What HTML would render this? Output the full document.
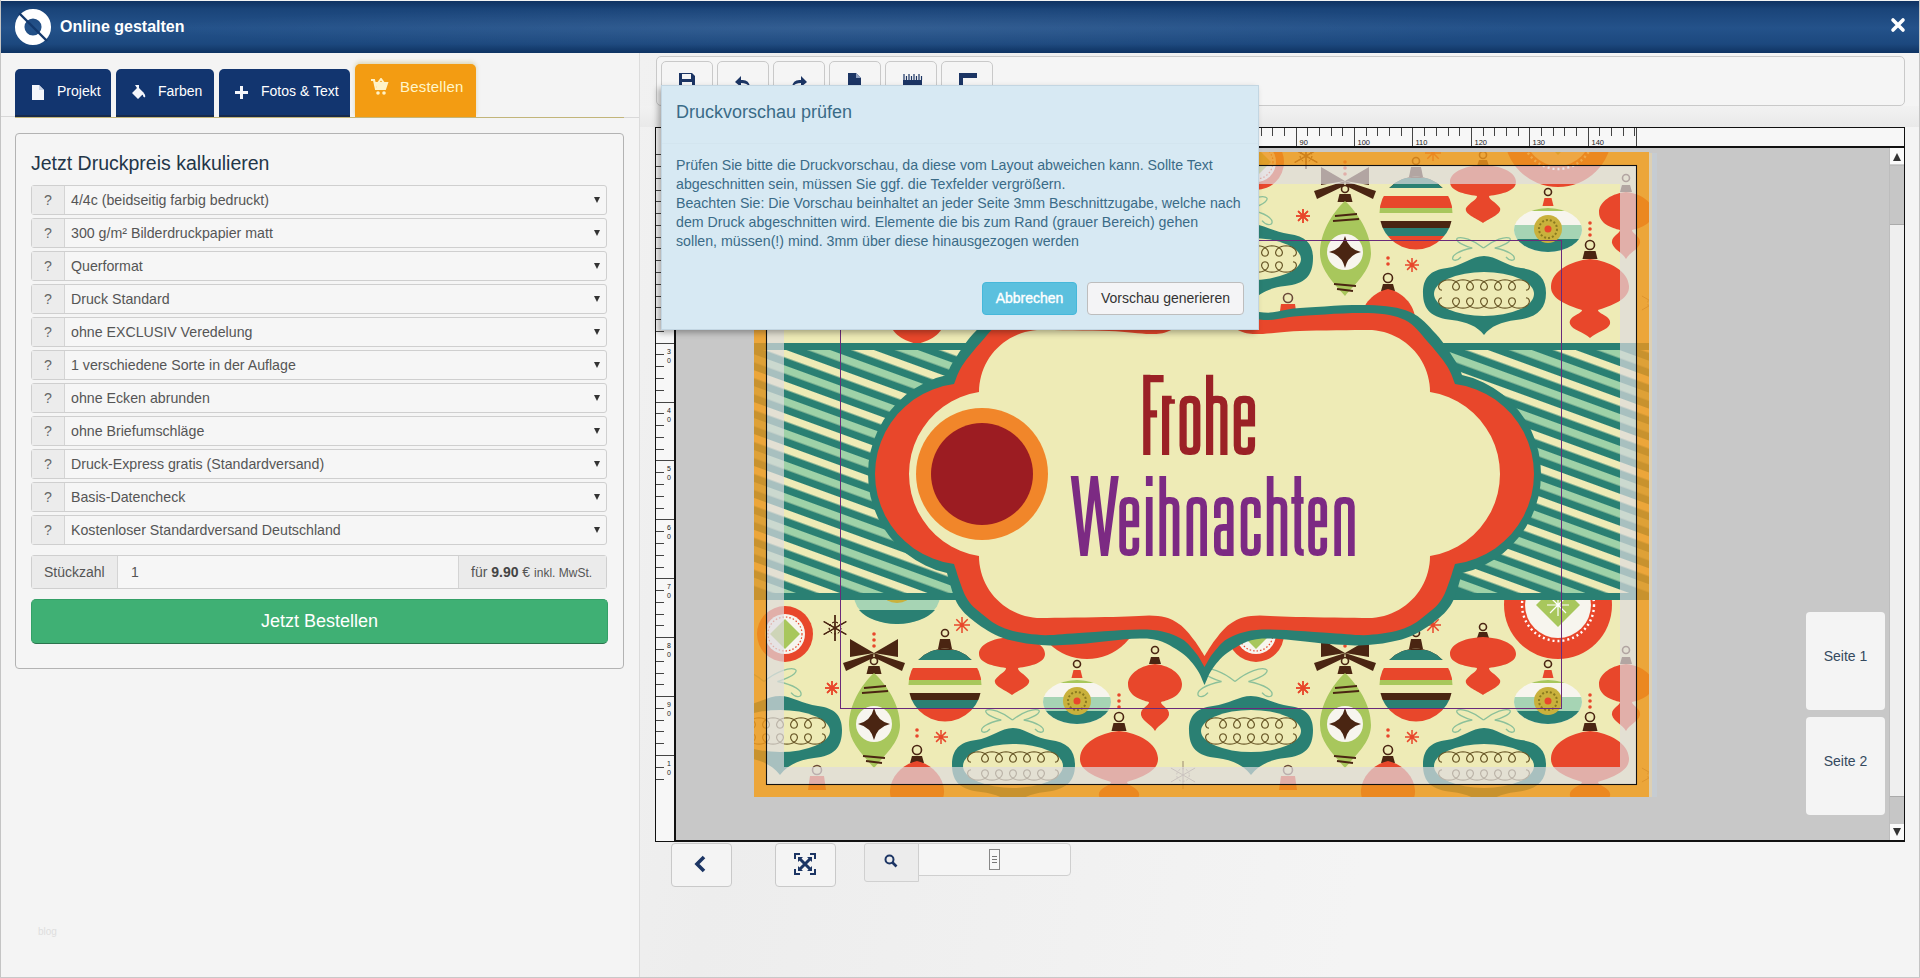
<!DOCTYPE html>
<html><head><meta charset="utf-8">
<style>
*{box-sizing:border-box;margin:0;padding:0}
html,body{width:1920px;height:978px;overflow:hidden}
body{position:relative;background:#f4f4f4;font-family:"Liberation Sans",sans-serif;color:#555}
.a{position:absolute}
#hdr{left:1px;top:1px;width:1918px;height:52px;background:radial-gradient(ellipse 700px 22px at 850px 27px,rgba(255,255,255,0.07),rgba(255,255,255,0) 100%),linear-gradient(#0f3262 0px,#1a4479 8px,#24528a 27px,#1c487e 43px,#133a6b 49px,#0e3363 52px)}
#hdr .t{left:59px;top:16px;color:#fff;font-weight:bold;font-size:16px;line-height:20px}
.tab{top:69px;height:48px;background:#12356f;border-radius:5px 5px 0 0;box-shadow:inset 0 -2px 0 #172a4c;color:#fff;font-size:14px;line-height:18px}
.tab span{position:absolute;top:13px}
.sel{left:31px;width:576px;height:30px;border:1px solid #cfcfcf;border-radius:3px;background:#f6f6f6;font-size:14.2px;color:#555}
.sel .q{position:absolute;left:0;top:0;width:33px;height:28px;background:#ececec;border-right:1px solid #d4d4d4;text-align:center;line-height:28px;color:#666}
.sel .v{position:absolute;left:39px;top:6px;line-height:16px;white-space:nowrap}
.sel .ar{position:absolute;left:562px;top:11px;width:0;height:0;border-left:3.5px solid transparent;border-right:3.5px solid transparent;border-top:6px solid #333}
.tb{top:61px;width:52px;height:40px;border:1px solid #c9c9c9;border-radius:5px;background:#f5f5f5}
.btm{border:1px solid #c9c9c9;border-radius:4px;background:#f4f4f4}
</style></head><body>
<!-- page borders -->
<div class="a" style="left:0;top:0;width:1px;height:978px;background:#c4c4c4"></div>
<div class="a" style="left:1919px;top:0;width:1px;height:978px;background:#c4c4c4"></div>
<div class="a" style="left:0;top:977px;width:1920px;height:1px;background:#c8c8c8"></div>

<!-- header -->
<div id="hdr" class="a">
  <svg class="a" style="left:12px;top:5px" width="42" height="42" viewBox="0 0 42 42">
    <circle cx="20" cy="21" r="13.3" fill="none" stroke="#fff" stroke-width="9.5"/>
    <line x1="6" y1="7" x2="34" y2="35" stroke="#14396c" stroke-width="2.4"/>
  </svg>
  <div class="a t">Online gestalten</div>
  <svg class="a" style="left:1889px;top:16px" width="16" height="16" viewBox="0 0 16 16">
    <path d="M3 3 L13 13 M13 3 L3 13" stroke="#fff" stroke-width="3.6" stroke-linecap="round"/>
  </svg>
</div>

<!-- left panel -->
<div class="a" style="left:1px;top:116px;width:14px;height:1px;background:#d8d8d8"></div>
<div class="a tab" style="left:15px;width:96px">
  <svg class="a" style="left:17px;top:16px" width="12" height="15" viewBox="0 0 12 15"><path d="M0 0 H7 L12 5 V15 H0Z" fill="#f4f6fb"/><path d="M7 0 V5 H12" fill="#c9d3e6"/></svg>
  <span style="left:42px">Projekt</span></div>
<div class="a tab" style="left:116px;width:98px">
  <svg class="a" style="left:14px;top:15px" width="16" height="16" viewBox="0 0 16 16"><path d="M5 1 L9 1 L9 4 L14 9 L8 15 L2 9 L7 4 Z" fill="#f4f6fb"/><path d="M12 9 Q15 11 14 13" stroke="#f4f6fb" stroke-width="2" fill="none"/></svg>
  <span style="left:42px">Farben</span></div>
<div class="a tab" style="left:219px;width:131px">
  <svg class="a" style="left:16px;top:17px" width="13" height="13" viewBox="0 0 13 13"><path d="M6.5 0 V13 M0 6.5 H13" stroke="#f4f6fb" stroke-width="3"/></svg>
  <span style="left:42px">Fotos &amp; Text</span></div>
<div class="a" style="left:355px;top:64px;width:121px;height:53px;background:#f39c12;border-radius:5px 5px 0 0;box-shadow:0 -2px 4px rgba(180,160,60,0.35)">
  <svg class="a" style="left:16px;top:14px" width="18" height="18" viewBox="0 0 18 18"><path d="M0 2 H3 L5 11 H14 L16 5 H4" fill="none" stroke="#fff3c8" stroke-width="2.2"/><path d="M4 4 H16 L14 11 H6Z" fill="#fff3c8"/><circle cx="7" cy="15" r="1.8" fill="#fff3c8"/><circle cx="13" cy="15" r="1.8" fill="#fff3c8"/><path d="M7 5 L10 1 L13 5" stroke="#fff3c8" stroke-width="2" fill="none"/></svg>
  <span class="a" style="left:45px;top:14px;font-size:15px;line-height:18px;color:#fff6c9;letter-spacing:0.2px">Bestellen</span></div>
<div class="a" style="left:15px;top:117px;width:609px;height:1px;background:#c2b57a"></div>
<div class="a" style="left:624px;top:117px;width:15px;height:1px;background:#d9d9d9"></div>

<div class="a" style="left:15px;top:133px;width:609px;height:536px;border:1px solid #b3b3b3;border-radius:4px;background:#f5f5f5"></div>
<div class="a" style="left:31px;top:151px;font-size:19.5px;line-height:24px;color:#233648;white-space:nowrap">Jetzt Druckpreis kalkulieren</div>

<div class="a sel" style="top:185px"><div class="q">?</div><div class="v">4/4c (beidseitig farbig bedruckt)</div><div class="ar"></div></div>
<div class="a sel" style="top:218px"><div class="q">?</div><div class="v">300 g/m² Bilderdruckpapier matt</div><div class="ar"></div></div>
<div class="a sel" style="top:251px"><div class="q">?</div><div class="v">Querformat</div><div class="ar"></div></div>
<div class="a sel" style="top:284px"><div class="q">?</div><div class="v">Druck Standard</div><div class="ar"></div></div>
<div class="a sel" style="top:317px"><div class="q">?</div><div class="v">ohne EXCLUSIV Veredelung</div><div class="ar"></div></div>
<div class="a sel" style="top:350px"><div class="q">?</div><div class="v">1 verschiedene Sorte in der Auflage</div><div class="ar"></div></div>
<div class="a sel" style="top:383px"><div class="q">?</div><div class="v">ohne Ecken abrunden</div><div class="ar"></div></div>
<div class="a sel" style="top:416px"><div class="q">?</div><div class="v">ohne Briefumschläge</div><div class="ar"></div></div>
<div class="a sel" style="top:449px"><div class="q">?</div><div class="v">Druck-Express gratis (Standardversand)</div><div class="ar"></div></div>
<div class="a sel" style="top:482px"><div class="q">?</div><div class="v">Basis-Datencheck</div><div class="ar"></div></div>
<div class="a sel" style="top:515px"><div class="q">?</div><div class="v">Kostenloser Standardversand Deutschland</div><div class="ar"></div></div>


<!-- Stückzahl -->
<div class="a" style="left:31px;top:555px;width:576px;height:34px;border:1px solid #cfcfcf;border-radius:3px;background:#f6f6f6"></div>
<div class="a" style="left:32px;top:556px;width:86px;height:32px;background:#ebebeb;border-right:1px solid #d4d4d4"></div>
<div class="a" style="left:44px;top:564px;font-size:14px;line-height:16px;color:#555">Stückzahl</div>
<div class="a" style="left:131px;top:564px;font-size:14px;line-height:16px;color:#555">1</div>
<div class="a" style="left:458px;top:556px;width:148px;height:32px;background:#ebebeb;border-left:1px solid #d4d4d4"></div>
<div class="a" style="left:471px;top:564px;font-size:14px;line-height:16px;color:#555;white-space:nowrap">für <b style="color:#444">9.90</b> € <span style="font-size:12px">inkl. MwSt.</span></div>
<div class="a" style="left:31px;top:599px;width:577px;height:45px;background:#3fb074;border-radius:5px;border:1px solid #34a067;border-bottom:1.5px solid #2b744d"></div>
<div class="a" style="left:31px;top:611px;width:577px;text-align:center;font-size:18px;line-height:20px;color:#fff">Jetzt Bestellen</div>
<div class="a" style="left:38px;top:926px;font-size:10px;color:#dedede">blog</div>

<div class="a" style="left:640px;top:53px;width:1279px;height:924px;background:linear-gradient(100deg,#f1f1f1 0%,#ededed 15%,#f0f0f0 35%,#f4f4f4 60%,#f4f4f4 100%)"></div>
<div class="a" style="left:640px;top:106px;width:1279px;height:21px;background:linear-gradient(#f2f2f2,#e9e9e9)"></div>
<!-- divider -->
<div class="a" style="left:639px;top:53px;width:1px;height:924px;background:#dcdcdc"></div>

<!-- toolbar -->
<div class="a" style="left:656px;top:56px;width:1249px;height:50px;border:1px solid #c9c9c9;border-radius:5px;background:#f5f5f5"></div>
<div class="a tb" style="left:661px"></div><svg class="a" style="left:679px;top:73px" width="20" height="16" viewBox="0 0 20 16"><path d="M0 0 H13 L16 3 V16 H0Z" fill="#1c3564"/><rect x="3" y="1" width="9" height="5" fill="#f5f5f5"/><rect x="3" y="9" width="10" height="7" fill="#f5f5f5"/></svg>
<div class="a tb" style="left:717px"></div><svg class="a" style="left:735px;top:73px" width="20" height="16" viewBox="0 0 20 16"><path d="M15 14 Q14 6 6 7 V3 L0 9 L6 14 V10 Q12 10 15 14Z" fill="#1c3564"/></svg>
<div class="a tb" style="left:773px"></div><svg class="a" style="left:791px;top:73px" width="20" height="16" viewBox="0 0 20 16"><path d="M1 14 Q2 6 10 7 V3 L16 9 L10 14 V10 Q4 10 1 14Z" fill="#1c3564"/></svg>
<div class="a tb" style="left:829px"></div><svg class="a" style="left:847px;top:73px" width="20" height="16" viewBox="0 0 20 16"><path d="M1 0 H9 L14 5 V16 H1Z" fill="#1c3564"/><path d="M9 0 V5 H14" fill="#8fa0c0"/></svg>
<div class="a tb" style="left:885px"></div><svg class="a" style="left:903px;top:73px" width="20" height="16" viewBox="0 0 20 16"><rect x="0" y="7" width="19" height="9" fill="#1c3564"/><path d="M1 7 V1 M3.5 7 V3 M6 7 V1 M8.5 7 V3 M11 7 V1 M13.5 7 V3 M16 7 V1 M18.5 7 V3" stroke="#1c3564" stroke-width="1.2"/></svg>
<div class="a tb" style="left:941px"></div><svg class="a" style="left:959px;top:73px" width="20" height="16" viewBox="0 0 20 16"><path d="M0 0 H18 V5 H4 V16 H0Z" fill="#1c3564"/></svg>


<!-- rulers + canvas -->
<div class="a" style="left:655px;top:127px;width:1250px;height:715px;background:#c8c8c8;border:1px solid #111"></div>
<div class="a" style="left:656px;top:128px;width:1248px;height:20px;background:#f7f7f7;border-bottom:2px solid #111"></div>
<div class="a" style="left:656px;top:128px;width:20px;height:713px;background:#f7f7f7;border-right:2px solid #111"></div>
<div class="a" style="left:675px;top:840px;width:1230px;height:2px;background:#111"></div>
<svg class="a" style="left:0;top:0;pointer-events:none" width="1920" height="978"><path d="M771.5 128V146 M782.5 128V136 M794.5 128V136 M806.5 128V136 M817.5 128V136 M829.5 128V146 M841.5 128V136 M852.5 128V136 M864.5 128V136 M876.5 128V136 M887.5 128V146 M899.5 128V136 M911.5 128V136 M922.5 128V136 M934.5 128V136 M946.5 128V146 M957.5 128V136 M969.5 128V136 M981.5 128V136 M992.5 128V136 M1004.5 128V146 M1016.5 128V136 M1027.5 128V136 M1039.5 128V136 M1051.5 128V136 M1062.5 128V146 M1074.5 128V136 M1086.5 128V136 M1097.5 128V136 M1109.5 128V136 M1121.5 128V146 M1132.5 128V136 M1144.5 128V136 M1156.5 128V136 M1167.5 128V136 M1179.5 128V146 M1191.5 128V136 M1202.5 128V136 M1214.5 128V136 M1226.5 128V136 M1237.5 128V146 M1249.5 128V136 M1261.5 128V136 M1272.5 128V136 M1284.5 128V136 M1296.5 128V146 M1307.5 128V136 M1319.5 128V136 M1331.5 128V136 M1342.5 128V136 M1354.5 128V146 M1366.5 128V136 M1377.5 128V136 M1389.5 128V136 M1401.5 128V136 M1412.5 128V146 M1424.5 128V136 M1436.5 128V136 M1448.5 128V136 M1459.5 128V136 M1471.5 128V146 M1483.5 128V136 M1494.5 128V136 M1506.5 128V136 M1518.5 128V136 M1529.5 128V146 M1541.5 128V136 M1553.5 128V136 M1564.5 128V136 M1576.5 128V136 M1588.5 128V146 M1599.5 128V136 M1611.5 128V136 M1623.5 128V136 M1634.5 128V136 M1636.5 128V146 M656 154.5H664 M656 166.5H674 M656 178.5H664 M656 190.5H664 M656 201.5H664 M656 213.5H664 M656 225.5H674 M656 237.5H664 M656 248.5H664 M656 260.5H664 M656 272.5H664 M656 284.5H674 M656 296.5H664 M656 307.5H664 M656 319.5H664 M656 331.5H664 M656 343.5H674 M656 354.5H664 M656 366.5H664 M656 378.5H664 M656 390.5H664 M656 402.5H674 M656 413.5H664 M656 425.5H664 M656 437.5H664 M656 449.5H664 M656 460.5H674 M656 472.5H664 M656 484.5H664 M656 496.5H664 M656 508.5H664 M656 519.5H674 M656 531.5H664 M656 543.5H664 M656 555.5H664 M656 567.5H664 M656 578.5H674 M656 590.5H664 M656 602.5H664 M656 614.5H664 M656 625.5H664 M656 637.5H674 M656 649.5H664 M656 661.5H664 M656 673.5H664 M656 684.5H664 M656 696.5H674 M656 708.5H664 M656 720.5H664 M656 731.5H664 M656 743.5H664 M656 755.5H674 M656 767.5H664 M656 779.5H664" stroke="#444" stroke-width="1" fill="none"/><text x="774.5" y="145" font-size="7.5" fill="#222">0</text><text x="832.5" y="145" font-size="7.5" fill="#222">10</text><text x="890.5" y="145" font-size="7.5" fill="#222">20</text><text x="949.5" y="145" font-size="7.5" fill="#222">30</text><text x="1007.5" y="145" font-size="7.5" fill="#222">40</text><text x="1065.5" y="145" font-size="7.5" fill="#222">50</text><text x="1124.5" y="145" font-size="7.5" fill="#222">60</text><text x="1182.5" y="145" font-size="7.5" fill="#222">70</text><text x="1240.5" y="145" font-size="7.5" fill="#222">80</text><text x="1299.5" y="145" font-size="7.5" fill="#222">90</text><text x="1357.5" y="145" font-size="7.5" fill="#222">100</text><text x="1415.5" y="145" font-size="7.5" fill="#222">110</text><text x="1474.5" y="145" font-size="7.5" fill="#222">120</text><text x="1532.5" y="145" font-size="7.5" fill="#222">130</text><text x="1591.5" y="145" font-size="7.5" fill="#222">140</text><text x="667" y="176.5" font-size="7" fill="#222">0</text><text x="667" y="235.5" font-size="7" fill="#222">1</text><text x="667" y="244.5" font-size="7" fill="#222">0</text><text x="667" y="294.5" font-size="7" fill="#222">2</text><text x="667" y="303.5" font-size="7" fill="#222">0</text><text x="667" y="353.5" font-size="7" fill="#222">3</text><text x="667" y="362.5" font-size="7" fill="#222">0</text><text x="667" y="412.5" font-size="7" fill="#222">4</text><text x="667" y="421.5" font-size="7" fill="#222">0</text><text x="667" y="470.5" font-size="7" fill="#222">5</text><text x="667" y="479.5" font-size="7" fill="#222">0</text><text x="667" y="529.5" font-size="7" fill="#222">6</text><text x="667" y="538.5" font-size="7" fill="#222">0</text><text x="667" y="588.5" font-size="7" fill="#222">7</text><text x="667" y="597.5" font-size="7" fill="#222">0</text><text x="667" y="647.5" font-size="7" fill="#222">8</text><text x="667" y="656.5" font-size="7" fill="#222">0</text><text x="667" y="706.5" font-size="7" fill="#222">9</text><text x="667" y="715.5" font-size="7" fill="#222">0</text><text x="667" y="765.5" font-size="7" fill="#222">1</text><text x="667" y="774.5" font-size="7" fill="#222">0</text></svg>

<!-- scrollbar -->
<div class="a" style="left:1889px;top:148px;width:15px;height:692px;background:#efefef;border-left:1px solid #bdbdbd"></div>
<div class="a" style="left:1890px;top:148px;width:14px;height:17px;background:#fafafa;border-bottom:1px solid #cfcfcf"></div>
<div class="a" style="left:1893px;top:153px;width:0;height:0;border-left:4px solid transparent;border-right:4px solid transparent;border-bottom:8px solid #333"></div>
<div class="a" style="left:1890px;top:165px;width:14px;height:60px;background:#c6c6c6;border-bottom:1px solid #aaa;border-top:1px solid #bbb"></div>
<div class="a" style="left:1890px;top:796px;width:14px;height:28px;background:#c6c6c6;border-top:1px solid #aaa"></div>
<div class="a" style="left:1890px;top:824px;width:14px;height:16px;background:#fafafa"></div>
<div class="a" style="left:1893px;top:828px;width:0;height:0;border-left:4px solid transparent;border-right:4px solid transparent;border-top:8px solid #333"></div>

<!-- page thumbs -->
<div class="a" style="left:1806px;top:612px;width:79px;height:98px;background:#f4f4f4;border-radius:4px"></div>
<div class="a" style="left:1806px;top:648px;width:79px;text-align:center;font-size:14px;line-height:16px;color:#34495e">Seite 1</div>
<div class="a" style="left:1806px;top:717px;width:79px;height:98px;background:#f4f4f4;border-radius:4px"></div>
<div class="a" style="left:1806px;top:753px;width:79px;text-align:center;font-size:14px;line-height:16px;color:#34495e">Seite 2</div>

<!-- bottom controls -->
<div class="a btm" style="left:671px;top:843px;width:61px;height:44px"></div>
<svg class="a" style="left:693px;top:855px" width="14" height="18" viewBox="0 0 14 18"><path d="M11 2 L4 9 L11 16" fill="none" stroke="#1c3564" stroke-width="3.6"/></svg>
<div class="a btm" style="left:775px;top:843px;width:61px;height:44px"></div>
<svg class="a" style="left:794px;top:853px" width="22" height="22" viewBox="0 0 22 22"><path d="M1 6 V1 H6 M16 1 H21 V6 M21 16 V21 H16 M6 21 H1 V16" fill="none" stroke="#1c3564" stroke-width="2"/><path d="M5 5 L17 17 M17 5 L5 17" stroke="#1c3564" stroke-width="3"/><path d="M4 4 H9 L4 9Z M18 4 V9 L13 4Z M18 18 H13 L18 13Z M4 18 V13 L9 18Z" fill="#1c3564"/></svg>
<div class="a" style="left:864px;top:843px;width:55px;height:39px;background:#ececec;border:1px solid #d0d0d0;border-radius:3px 0 0 3px"></div>
<svg class="a" style="left:884px;top:854px" width="14" height="14" viewBox="0 0 14 14"><circle cx="5.5" cy="5.5" r="4" fill="none" stroke="#1c3564" stroke-width="2"/><path d="M8.5 8.5 L12.5 12.5" stroke="#1c3564" stroke-width="2.6"/></svg>
<div class="a" style="left:918px;top:843px;width:153px;height:33px;background:#f5f5f5;border:1px solid #cfcfcf;border-radius:0 4px 4px 0"></div>
<div class="a" style="left:989px;top:849px;width:11px;height:21px;background:#f8f8f8;border:1px solid #888"></div>
<div class="a" style="left:992px;top:856px;width:5px;height:1px;background:#777"></div>
<div class="a" style="left:992px;top:859px;width:5px;height:1px;background:#777"></div>
<div class="a" style="left:992px;top:862px;width:5px;height:1px;background:#777"></div>

<!-- CARD -->
<div class="a" style="left:1649px;top:153px;width:3px;height:644px;background:#ddd0b4"></div><div class="a" style="left:1652px;top:153px;width:5px;height:644px;background:#c6ccd2"></div>
<svg class="a" style="left:754px;top:152px" width="895" height="645" viewBox="754 152 895 645"><defs><g id="tile"><circle cx="246" cy="5" r="54" fill="#e8472b"/><circle cx="246" cy="5" r="33" fill="#f7f5ee"/><circle cx="246" cy="5" r="29" fill="none" stroke="#f7f5ee" stroke-width="3" stroke-dasharray="2 3"/><circle cx="246" cy="5" r="36" fill="none" stroke="#fff" stroke-width="2.4" stroke-dasharray="2 3"/><path d="M246 -17 L268 5 L246 27 L224 5Z" fill="#a8c75c"/><path d="M246 -6V16M235 5H257M238 -3L254 13M254 -3L238 13" stroke="#fff" stroke-width="1.2"/><ellipse cx="56" cy="-4" rx="43" ry="28" fill="#a6d4b4"/><path d="M18 10 H94 A43 28 0 0 1 56 24 A43 28 0 0 1 18 10Z" fill="#2a8073"/><ellipse cx="56" cy="-6" rx="14" ry="9" fill="#c9b13c"/><circle cx="415" cy="34" r="28" fill="#e8472b"/><circle cx="415" cy="34" r="20" fill="#f7f5ee"/><circle cx="415" cy="34" r="17" fill="none" stroke="#e8472b" stroke-width="1.2" stroke-dasharray="1.5 2"/><path d="M415 19 L430 34 L415 49 L400 34Z" fill="#a8c75c"/><path d="M465.0 15.0L465.0 41.0M476.3 21.5L453.7 34.5M476.3 34.5L453.7 21.5" stroke="#4a2512" stroke-width="1.3"/><circle cx="465" cy="28" r="5.8500000000000005" fill="none" stroke="#4a2512" stroke-width="1" stroke-dasharray="2 2"/><path d="M-6.0 15.0L-6.0 41.0M5.3 21.5L-17.3 34.5M5.3 34.5L-17.3 21.5" stroke="#4a2512" stroke-width="1.3"/><circle cx="-6" cy="28" r="5.8500000000000005" fill="none" stroke="#4a2512" stroke-width="1" stroke-dasharray="2 2"/><path d="M342.0 161.0L342.0 189.0M354.1 168.0L329.9 182.0M354.1 182.0L329.9 168.0" stroke="#9b8a70" stroke-width="1"/><circle cx="342" cy="175" r="6.3" fill="none" stroke="#9b8a70" stroke-width="1" stroke-dasharray="2 2"/><path d="M455.0 88.0L469.0 88.0M457.1 83.1L466.9 92.9M462.0 81.0L462.0 95.0M466.9 83.1L457.1 92.9" stroke="#e8472b" stroke-width="1.5"/><path d="M-16.0 88.0L-2.0 88.0M-13.9 83.1L-4.1 92.9M-9.0 81.0L-9.0 95.0M-4.1 83.1L-13.9 92.9" stroke="#e8472b" stroke-width="1.5"/><path d="M93.0 137.0L107.0 137.0M95.1 132.1L104.9 141.9M100.0 130.0L100.0 144.0M104.9 132.1L95.1 141.9" stroke="#e8472b" stroke-width="1.5"/><path d="M113.0 25.0L129.0 25.0M115.3 19.3L126.7 30.7M121.0 17.0L121.0 33.0M126.7 19.3L115.3 30.7" stroke="#e8472b" stroke-width="1.5"/><path d="M33 53 L9 39 L9 57Z M33 53 L57 39 L57 57Z M33 53 L2 63 L5 71 L34 57Z M33 53 L64 63 L61 71 L32 57Z" fill="#4a2512"/><circle cx="33" cy="34" r="1.8" fill="#e8472b"/><circle cx="33" cy="40" r="1.8" fill="#e8472b"/><circle cx="33" cy="46" r="1.8" fill="#e8472b"/><circle cx="33" cy="61" r="3.5" fill="none" stroke="#4a2512" stroke-width="1.6"/><path d="M27.5 66H38.5L40.5 74H25.5Z" fill="#4a2512"/><path d="M33 73 C20 85 8 105 8 125 C8 142 22 155 33 168 C44 155 59 142 59 125 C59 105 46 85 33 73Z" fill="#a8c75c"/><circle cx="33" cy="124" r="18" fill="#f7f5ee"/><path d="M33 108 Q36 121 49 124 Q36 127 33 140 Q30 127 17 124 Q30 121 33 108Z" fill="#4a2512"/><path d="M23 88 L45 86 M21 93 L47 91 M22 156 L44 158 M25 161 L41 163" stroke="#4a2512" stroke-width="2"/><circle cx="104" cy="33" r="3.5" fill="none" stroke="#4a2512" stroke-width="1.6"/><path d="M99.0 39H109.0L111.0 49H97.0Z" fill="#4a2512"/><clipPath id="cb"><circle cx="104" cy="85" r="36.5"/></clipPath><g clip-path="url(#cb)"><rect x="60" y="40" width="90" height="90" fill="#eeebb6"/><rect x="60" y="40" width="90" height="20" fill="#4a2512"/><rect x="60" y="50" width="90" height="10" fill="#2a8073"/><rect x="60" y="68" width="90" height="12" fill="#e8472b"/><rect x="60" y="80" width="90" height="5" fill="#a8c75c"/><rect x="60" y="93" width="90" height="7" fill="#4a2512"/><rect x="60" y="100" width="90" height="8" fill="#2a8073"/><rect x="60" y="108" width="90" height="20" fill="#e8472b"/></g><circle cx="76" cy="130" r="1.8" fill="#e8472b"/><circle cx="76" cy="136" r="1.8" fill="#e8472b"/><circle cx="76" cy="150" r="4.5" fill="none" stroke="#4a2512" stroke-width="1.6"/><path d="M71.0 156H81.0L83.0 163H69.0Z" fill="#4a2512"/><path d="M76 161 C62 164 50 176 49 190 C48 204 60 212 76 216 C92 212 104 204 103 190 C102 176 90 164 76 161Z" fill="#e8472b"/><path d="M171.5 120.0C149.0 102.0 130.25 111.0 160.25 120.0C130.25 126.0 141.5 138.0 149.0 129.0M171.5 120.0C194.0 102.0 212.75 111.0 182.75 120.0C212.75 126.0 201.5 138.0 194.0 129.0" fill="none" stroke="#8cc09a" stroke-width="1.3"/><path d="M172 128 C160 128 150 138 135 140 C118 142 111 150 111 165 C111 182 120 190 140 192 C155 194 165 198 172 207 C179 198 189 194 204 192 C224 190 234 182 234 165 C234 150 226 142 209 140 C194 138 184 128 172 128Z" fill="#2a8073"/><ellipse cx="172" cy="166" rx="50" ry="22" fill="#eeebb6"/><path d="M130.0 162.2 L128.9 162.0 L127.9 161.5 L127.2 160.7 L126.7 159.6 L126.6 158.3 L127.0 157.0 L127.8 155.7 L129.0 154.4 L130.7 153.3 L132.6 152.5 L134.7 152.0 L137.0 151.8 L139.3 152.0 L141.4 152.5 L143.3 153.3 L145.0 154.4 L146.2 155.7 L147.0 157.0 L147.4 158.3 L147.3 159.6 L146.8 160.7 L146.1 161.5 L145.1 162.0 L144.0 162.2 L142.9 162.0 L141.9 161.5 L141.2 160.7 L140.7 159.6 L140.6 158.3 L141.0 157.0 L141.8 155.7 L143.0 154.4 L144.7 153.3 L146.6 152.5 L148.7 152.0 L151.0 151.8 L153.3 152.0 L155.4 152.5 L157.3 153.3 L159.0 154.4 L160.2 155.7 L161.0 157.0 L161.4 158.3 L161.3 159.6 L160.8 160.7 L160.1 161.5 L159.1 162.0 L158.0 162.2 L156.9 162.0 L155.9 161.5 L155.2 160.7 L154.7 159.6 L154.6 158.3 L155.0 157.0 L155.8 155.7 L157.0 154.4 L158.7 153.3 L160.6 152.5 L162.7 152.0 L165.0 151.8 L167.3 152.0 L169.4 152.5 L171.3 153.3 L173.0 154.4 L174.2 155.7 L175.0 157.0 L175.4 158.3 L175.3 159.6 L174.8 160.7 L174.1 161.5 L173.1 162.0 L172.0 162.2 L170.9 162.0 L169.9 161.5 L169.2 160.7 L168.7 159.6 L168.6 158.3 L169.0 157.0 L169.8 155.7 L171.0 154.4 L172.7 153.3 L174.6 152.5 L176.7 152.0 L179.0 151.8 L181.3 152.0 L183.4 152.5 L185.3 153.3 L187.0 154.4 L188.2 155.7 L189.0 157.0 L189.4 158.3 L189.3 159.6 L188.8 160.7 L188.1 161.5 L187.1 162.0 L186.0 162.2 L184.9 162.0 L183.9 161.5 L183.2 160.7 L182.7 159.6 L182.6 158.3 L183.0 157.0 L183.8 155.7 L185.0 154.4 L186.7 153.3 L188.6 152.5 L190.7 152.0 L193.0 151.8 L195.3 152.0 L197.4 152.5 L199.3 153.3 L201.0 154.4 L202.2 155.7 L203.0 157.0 L203.4 158.3 L203.3 159.6 L202.8 160.7 L202.1 161.5 L201.1 162.0 L200.0 162.2 L198.9 162.0 L197.9 161.5 L197.2 160.7 L196.7 159.6 L196.6 158.3 L197.0 157.0 L197.8 155.7 L199.0 154.4 L200.7 153.3 L202.6 152.5 L204.7 152.0 L207.0 151.8 L209.3 152.0 L211.4 152.5 L213.3 153.3 L215.0 154.4 L216.2 155.7 L217.0 157.0 L217.4 158.3 L217.3 159.6 L216.8 160.7 L216.1 161.5 L215.1 162.0 L214.0 162.2M130.0 169.8 L128.9 170.0 L127.9 170.5 L127.2 171.3 L126.7 172.4 L126.6 173.7 L127.0 175.0 L127.8 176.3 L129.0 177.6 L130.7 178.7 L132.6 179.5 L134.7 180.0 L137.0 180.2 L139.3 180.0 L141.4 179.5 L143.3 178.7 L145.0 177.6 L146.2 176.3 L147.0 175.0 L147.4 173.7 L147.3 172.4 L146.8 171.3 L146.1 170.5 L145.1 170.0 L144.0 169.8 L142.9 170.0 L141.9 170.5 L141.2 171.3 L140.7 172.4 L140.6 173.7 L141.0 175.0 L141.8 176.3 L143.0 177.6 L144.7 178.7 L146.6 179.5 L148.7 180.0 L151.0 180.2 L153.3 180.0 L155.4 179.5 L157.3 178.7 L159.0 177.6 L160.2 176.3 L161.0 175.0 L161.4 173.7 L161.3 172.4 L160.8 171.3 L160.1 170.5 L159.1 170.0 L158.0 169.8 L156.9 170.0 L155.9 170.5 L155.2 171.3 L154.7 172.4 L154.6 173.7 L155.0 175.0 L155.8 176.3 L157.0 177.6 L158.7 178.7 L160.6 179.5 L162.7 180.0 L165.0 180.2 L167.3 180.0 L169.4 179.5 L171.3 178.7 L173.0 177.6 L174.2 176.3 L175.0 175.0 L175.4 173.7 L175.3 172.4 L174.8 171.3 L174.1 170.5 L173.1 170.0 L172.0 169.8 L170.9 170.0 L169.9 170.5 L169.2 171.3 L168.7 172.4 L168.6 173.7 L169.0 175.0 L169.8 176.3 L171.0 177.6 L172.7 178.7 L174.6 179.5 L176.7 180.0 L179.0 180.2 L181.3 180.0 L183.4 179.5 L185.3 178.7 L187.0 177.6 L188.2 176.3 L189.0 175.0 L189.4 173.7 L189.3 172.4 L188.8 171.3 L188.1 170.5 L187.1 170.0 L186.0 169.8 L184.9 170.0 L183.9 170.5 L183.2 171.3 L182.7 172.4 L182.6 173.7 L183.0 175.0 L183.8 176.3 L185.0 177.6 L186.7 178.7 L188.6 179.5 L190.7 180.0 L193.0 180.2 L195.3 180.0 L197.4 179.5 L199.3 178.7 L201.0 177.6 L202.2 176.3 L203.0 175.0 L203.4 173.7 L203.3 172.4 L202.8 171.3 L202.1 170.5 L201.1 170.0 L200.0 169.8 L198.9 170.0 L197.9 170.5 L197.2 171.3 L196.7 172.4 L196.6 173.7 L197.0 175.0 L197.8 176.3 L199.0 177.6 L200.7 178.7 L202.6 179.5 L204.7 180.0 L207.0 180.2 L209.3 180.0 L211.4 179.5 L213.3 178.7 L215.0 177.6 L216.2 176.3 L217.0 175.0 L217.4 173.7 L217.3 172.4 L216.8 171.3 L216.1 170.5 L215.1 170.0 L214.0 169.8" fill="none" stroke="#6b5a2a" stroke-width="1.2"/><circle cx="171" cy="27" r="3.5" fill="none" stroke="#4a2512" stroke-width="1.6"/><path d="M167.0 32H175.0L177.0 38H165.0Z" fill="#4a2512"/><path d="M171 37 C150 38 138 45 138 54 C138 63 152 66 165 68 C165 72 158 74 154 80 C152 86 164 90 171 95 C178 90 190 86 188 80 C184 74 177 72 177 68 C190 66 204 63 204 54 C204 45 192 38 171 37Z" fill="#e8472b"/><circle cx="236" cy="64" r="3.5" fill="none" stroke="#4a2512" stroke-width="1.6"/><path d="M232.5 70H239.5L241.5 78H230.5Z" fill="#e8472b"/><clipPath id="hb"><ellipse cx="236" cy="102" rx="34" ry="22"/></clipPath><g clip-path="url(#hb)"><rect x="200" y="78" width="72" height="50" fill="#f7f5ee"/><rect x="200" y="78" width="72" height="5" fill="#a8c75c"/><rect x="200" y="97" width="72" height="14" fill="#a6d4b4"/><rect x="200" y="111" width="72" height="14" fill="#2a8073"/></g><circle cx="236" cy="101" r="14" fill="#c9b13c"/><circle cx="236" cy="101" r="9" fill="none" stroke="#8a7a20" stroke-width="2" stroke-dasharray="2 2"/><circle cx="236" cy="101" r="3.5" fill="#e8472b"/><circle cx="278" cy="95" r="1.8" fill="#e8472b"/><circle cx="278" cy="101" r="1.8" fill="#e8472b"/><circle cx="278" cy="107" r="1.8" fill="#e8472b"/><circle cx="278" cy="117" r="4.5" fill="none" stroke="#4a2512" stroke-width="1.6"/><path d="M272.5 123H283.5L285.5 131H270.5Z" fill="#4a2512"/><path d="M278 131 C258 133 240 143 239 158 C238 172 258 178 270 182 C270 186 256 188 258 196 C260 202 272 204 278 210 C284 204 296 202 298 196 C300 188 286 186 286 182 C298 178 318 172 317 158 C316 143 298 133 278 131Z" fill="#e8472b"/><circle cx="314" cy="50" r="3.5" fill="none" stroke="#4a2512" stroke-width="1.6"/><path d="M310.0 57H318.0L320.0 64H308.0Z" fill="#4a2512"/><path d="M314 64 C296 66 287 76 287 84 C287 96 300 100 308 102 C308 106 299 108 300 115 C302 122 310 124 314 131 C318 124 326 122 328 115 C329 108 320 106 320 102 C328 100 341 96 341 84 C341 76 332 66 314 64Z" fill="#e8472b"/><path d="M394.0 81.5C367.0 59.3 344.5 70.4 380.5 81.5C344.5 88.9 358.0 103.7 367.0 92.6M394.0 81.5C421.0 59.3 443.5 70.4 407.5 81.5C443.5 88.9 430.0 103.7 421.0 92.6" fill="none" stroke="#8cc09a" stroke-width="1.3"/><path d="M410 96 C398 96 388 104 372 106 C355 108 348 116 348 130 C348 148 356 156 376 158 C392 160 402 165 410 175 C418 165 428 160 444 158 C464 156 472 148 472 130 C472 116 465 108 448 106 C432 104 422 96 410 96Z" fill="#2a8073"/><ellipse cx="410" cy="131" rx="50" ry="21" fill="#eeebb6"/><path d="M368.0 128.2 L366.9 128.0 L365.9 127.5 L365.2 126.7 L364.7 125.6 L364.6 124.3 L365.0 123.0 L365.8 121.7 L367.0 120.4 L368.7 119.3 L370.6 118.5 L372.7 118.0 L375.0 117.8 L377.3 118.0 L379.4 118.5 L381.3 119.3 L383.0 120.4 L384.2 121.7 L385.0 123.0 L385.4 124.3 L385.3 125.6 L384.8 126.7 L384.1 127.5 L383.1 128.0 L382.0 128.2 L380.9 128.0 L379.9 127.5 L379.2 126.7 L378.7 125.6 L378.6 124.3 L379.0 123.0 L379.8 121.7 L381.0 120.4 L382.7 119.3 L384.6 118.5 L386.7 118.0 L389.0 117.8 L391.3 118.0 L393.4 118.5 L395.3 119.3 L397.0 120.4 L398.2 121.7 L399.0 123.0 L399.4 124.3 L399.3 125.6 L398.8 126.7 L398.1 127.5 L397.1 128.0 L396.0 128.2 L394.9 128.0 L393.9 127.5 L393.2 126.7 L392.7 125.6 L392.6 124.3 L393.0 123.0 L393.8 121.7 L395.0 120.4 L396.7 119.3 L398.6 118.5 L400.7 118.0 L403.0 117.8 L405.3 118.0 L407.4 118.5 L409.3 119.3 L411.0 120.4 L412.2 121.7 L413.0 123.0 L413.4 124.3 L413.3 125.6 L412.8 126.7 L412.1 127.5 L411.1 128.0 L410.0 128.2 L408.9 128.0 L407.9 127.5 L407.2 126.7 L406.7 125.6 L406.6 124.3 L407.0 123.0 L407.8 121.7 L409.0 120.4 L410.7 119.3 L412.6 118.5 L414.7 118.0 L417.0 117.8 L419.3 118.0 L421.4 118.5 L423.3 119.3 L425.0 120.4 L426.2 121.7 L427.0 123.0 L427.4 124.3 L427.3 125.6 L426.8 126.7 L426.1 127.5 L425.1 128.0 L424.0 128.2 L422.9 128.0 L421.9 127.5 L421.2 126.7 L420.7 125.6 L420.6 124.3 L421.0 123.0 L421.8 121.7 L423.0 120.4 L424.7 119.3 L426.6 118.5 L428.7 118.0 L431.0 117.8 L433.3 118.0 L435.4 118.5 L437.3 119.3 L439.0 120.4 L440.2 121.7 L441.0 123.0 L441.4 124.3 L441.3 125.6 L440.8 126.7 L440.1 127.5 L439.1 128.0 L438.0 128.2 L436.9 128.0 L435.9 127.5 L435.2 126.7 L434.7 125.6 L434.6 124.3 L435.0 123.0 L435.8 121.7 L437.0 120.4 L438.7 119.3 L440.6 118.5 L442.7 118.0 L445.0 117.8 L447.3 118.0 L449.4 118.5 L451.3 119.3 L453.0 120.4 L454.2 121.7 L455.0 123.0 L455.4 124.3 L455.3 125.6 L454.8 126.7 L454.1 127.5 L453.1 128.0 L452.0 128.2M368.0 133.8 L366.9 134.0 L365.9 134.5 L365.2 135.3 L364.7 136.4 L364.6 137.7 L365.0 139.0 L365.8 140.3 L367.0 141.6 L368.7 142.7 L370.6 143.5 L372.7 144.0 L375.0 144.2 L377.3 144.0 L379.4 143.5 L381.3 142.7 L383.0 141.6 L384.2 140.3 L385.0 139.0 L385.4 137.7 L385.3 136.4 L384.8 135.3 L384.1 134.5 L383.1 134.0 L382.0 133.8 L380.9 134.0 L379.9 134.5 L379.2 135.3 L378.7 136.4 L378.6 137.7 L379.0 139.0 L379.8 140.3 L381.0 141.6 L382.7 142.7 L384.6 143.5 L386.7 144.0 L389.0 144.2 L391.3 144.0 L393.4 143.5 L395.3 142.7 L397.0 141.6 L398.2 140.3 L399.0 139.0 L399.4 137.7 L399.3 136.4 L398.8 135.3 L398.1 134.5 L397.1 134.0 L396.0 133.8 L394.9 134.0 L393.9 134.5 L393.2 135.3 L392.7 136.4 L392.6 137.7 L393.0 139.0 L393.8 140.3 L395.0 141.6 L396.7 142.7 L398.6 143.5 L400.7 144.0 L403.0 144.2 L405.3 144.0 L407.4 143.5 L409.3 142.7 L411.0 141.6 L412.2 140.3 L413.0 139.0 L413.4 137.7 L413.3 136.4 L412.8 135.3 L412.1 134.5 L411.1 134.0 L410.0 133.8 L408.9 134.0 L407.9 134.5 L407.2 135.3 L406.7 136.4 L406.6 137.7 L407.0 139.0 L407.8 140.3 L409.0 141.6 L410.7 142.7 L412.6 143.5 L414.7 144.0 L417.0 144.2 L419.3 144.0 L421.4 143.5 L423.3 142.7 L425.0 141.6 L426.2 140.3 L427.0 139.0 L427.4 137.7 L427.3 136.4 L426.8 135.3 L426.1 134.5 L425.1 134.0 L424.0 133.8 L422.9 134.0 L421.9 134.5 L421.2 135.3 L420.7 136.4 L420.6 137.7 L421.0 139.0 L421.8 140.3 L423.0 141.6 L424.7 142.7 L426.6 143.5 L428.7 144.0 L431.0 144.2 L433.3 144.0 L435.4 143.5 L437.3 142.7 L439.0 141.6 L440.2 140.3 L441.0 139.0 L441.4 137.7 L441.3 136.4 L440.8 135.3 L440.1 134.5 L439.1 134.0 L438.0 133.8 L436.9 134.0 L435.9 134.5 L435.2 135.3 L434.7 136.4 L434.6 137.7 L435.0 139.0 L435.8 140.3 L437.0 141.6 L438.7 142.7 L440.6 143.5 L442.7 144.0 L445.0 144.2 L447.3 144.0 L449.4 143.5 L451.3 142.7 L453.0 141.6 L454.2 140.3 L455.0 139.0 L455.4 137.7 L455.3 136.4 L454.8 135.3 L454.1 134.5 L453.1 134.0 L452.0 133.8" fill="none" stroke="#6b5a2a" stroke-width="1.2"/><circle cx="447" cy="170" r="4.5" fill="none" stroke="#6b4a3a" stroke-width="1.6"/><path d="M440 176 H454 L456 190 H438Z" fill="#e8472b"/></g><pattern id="stp" patternUnits="userSpaceOnUse" width="30" height="30" patternTransform="rotate(20)"><rect width="30" height="30" fill="#eeebb6"/><rect y="7.5" width="30" height="7.5" fill="#2a8073"/><rect y="15" width="30" height="7.5" fill="#9fd2a8"/><rect y="22.5" width="30" height="7.5" fill="#2a8073"/></pattern><clipPath id="cc"><rect x="754" y="152" width="895" height="645"/></clipPath></defs><g clip-path="url(#cc)"><rect x="754" y="152" width="895" height="645" fill="#eeebb6"/><use href="#tile" x="1312" y="128"/><use href="#tile" x="1312" y="600"/><use href="#tile" x="841" y="128"/><use href="#tile" x="841" y="600"/><use href="#tile" x="370" y="128"/><use href="#tile" x="370" y="600"/><use href="#tile" x="-101" y="128"/><use href="#tile" x="-101" y="600"/><rect x="754" y="343" width="895" height="257" fill="url(#stp)"/><rect x="754" y="343" width="895" height="7" fill="#2a8073"/><rect x="754" y="593" width="895" height="7" fill="#2a8073"/><path d="M1204.5 265.0 L1205.7 267.1 L1207.2 270.0 L1208.9 273.5 L1210.9 277.2 L1213.2 281.2 L1215.8 285.1 L1218.8 288.8 L1222.0 292.0 L1225.7 295.0 L1229.8 298.1 L1234.3 301.1 L1239.0 303.9 L1244.0 306.6 L1249.0 308.9 L1254.1 310.7 L1259.0 312.0 L1263.7 312.6 L1268.3 312.7 L1272.9 312.2 L1277.6 311.4 L1282.5 310.5 L1287.8 309.5 L1293.6 308.6 L1300.0 308.0 L1307.4 307.5 L1315.7 306.9 L1324.7 306.4 L1333.9 305.8 L1343.2 305.3 L1352.2 305.0 L1360.6 304.9 L1368.0 305.0 L1374.6 305.3 L1380.7 305.7 L1386.4 306.2 L1391.6 306.9 L1396.6 307.8 L1401.2 309.0 L1405.7 310.3 L1410.0 312.0 L1414.1 314.0 L1417.8 316.3 L1421.2 318.9 L1424.4 321.7 L1427.4 324.7 L1430.3 327.7 L1433.1 330.9 L1436.0 334.0 L1438.9 337.3 L1441.8 340.9 L1444.6 344.7 L1447.2 348.6 L1449.8 352.3 L1452.1 355.9 L1454.2 359.2 L1456.0 362.0 L1457.5 364.4 L1458.6 366.6 L1459.5 368.5 L1460.2 370.2 L1460.8 371.7 L1461.2 373.0 L1461.6 374.1 L1462.0 375.0 L1462.0 375.0 L1473.0 378.1 L1483.5 382.5 L1493.5 388.0 L1502.8 394.6 L1511.3 402.2 L1518.8 410.7 L1525.4 420.0 L1531.0 429.9 L1535.3 440.4 L1538.5 451.4 L1540.4 462.6 L1541.0 474.0 L1540.4 485.4 L1538.5 496.6 L1535.3 507.6 L1531.0 518.1 L1525.4 528.0 L1518.8 537.3 L1511.3 545.8 L1502.8 553.4 L1493.5 560.0 L1483.5 565.5 L1473.0 569.9 L1462.0 573.0 L1462.0 573.0 L1461.3 575.4 L1460.4 578.6 L1459.3 582.5 L1458.1 586.8 L1456.8 591.2 L1455.3 595.6 L1453.7 599.6 L1452.0 603.0 L1450.2 605.9 L1448.3 608.6 L1446.3 611.1 L1444.1 613.4 L1441.8 615.6 L1439.4 617.7 L1436.8 619.8 L1434.0 622.0 L1431.0 624.2 L1427.9 626.4 L1424.7 628.6 L1421.2 630.8 L1417.7 632.8 L1413.9 634.7 L1410.0 636.5 L1406.0 638.0 L1401.7 639.4 L1397.2 640.6 L1392.5 641.6 L1387.6 642.6 L1382.7 643.4 L1377.7 644.0 L1372.8 644.6 L1368.0 645.0 L1363.5 645.3 L1359.2 645.4 L1355.1 645.4 L1350.9 645.3 L1346.4 645.0 L1341.6 644.7 L1336.2 644.4 L1330.0 644.0 L1322.7 643.4 L1314.3 642.5 L1305.1 641.5 L1295.6 640.5 L1286.2 639.5 L1277.2 638.8 L1269.0 638.5 L1262.0 638.6 L1256.2 639.3 L1251.1 640.3 L1246.7 641.7 L1242.8 643.4 L1239.3 645.2 L1236.1 647.2 L1233.0 649.1 L1230.0 651.0 L1227.1 652.9 L1224.5 654.9 L1222.2 657.0 L1220.0 659.2 L1218.1 661.4 L1216.3 663.6 L1214.6 665.8 L1213.0 668.0 L1211.5 670.2 L1210.1 672.6 L1208.8 675.1 L1207.7 677.6 L1206.7 679.9 L1205.8 681.9 L1205.1 683.7 L1204.5 685.0 L1204.5 685.0 L1203.9 683.7 L1203.2 681.9 L1202.3 679.9 L1201.3 677.6 L1200.2 675.1 L1198.9 672.6 L1197.5 670.2 L1196.0 668.0 L1194.4 665.8 L1192.7 663.6 L1190.9 661.4 L1189.0 659.2 L1186.8 657.0 L1184.5 654.9 L1181.9 652.9 L1179.0 651.0 L1176.0 649.1 L1172.9 647.2 L1169.7 645.2 L1166.2 643.4 L1162.3 641.7 L1157.9 640.3 L1152.8 639.3 L1147.0 638.6 L1140.0 638.5 L1131.8 638.8 L1122.8 639.5 L1113.4 640.5 L1103.9 641.5 L1094.7 642.5 L1086.3 643.4 L1079.0 644.0 L1072.8 644.4 L1067.4 644.7 L1062.6 645.0 L1058.1 645.3 L1053.9 645.4 L1049.8 645.4 L1045.5 645.3 L1041.0 645.0 L1036.2 644.6 L1031.3 644.0 L1026.3 643.4 L1021.4 642.6 L1016.5 641.6 L1011.8 640.6 L1007.3 639.4 L1003.0 638.0 L999.0 636.5 L995.1 634.7 L991.3 632.8 L987.8 630.8 L984.3 628.6 L981.1 626.4 L978.0 624.2 L975.0 622.0 L972.2 619.8 L969.6 617.7 L967.2 615.6 L964.9 613.4 L962.7 611.1 L960.7 608.6 L958.8 605.9 L957.0 603.0 L955.3 599.6 L953.7 595.6 L952.2 591.2 L950.9 586.8 L949.7 582.5 L948.6 578.6 L947.7 575.4 L947.0 573.0 L947.0 573.0 L936.0 569.9 L925.5 565.5 L915.5 560.0 L906.2 553.4 L897.7 545.8 L890.2 537.3 L883.6 528.0 L878.0 518.1 L873.7 507.6 L870.5 496.6 L868.6 485.4 L868.0 474.0 L868.6 462.6 L870.5 451.4 L873.7 440.4 L878.0 429.9 L883.6 420.0 L890.2 410.7 L897.7 402.2 L906.2 394.6 L915.5 388.0 L925.5 382.5 L936.0 378.1 L947.0 375.0 L947.0 375.0 L947.4 374.1 L947.8 373.0 L948.2 371.7 L948.8 370.2 L949.5 368.5 L950.4 366.6 L951.5 364.4 L953.0 362.0 L954.8 359.2 L956.9 355.9 L959.2 352.3 L961.8 348.6 L964.4 344.7 L967.2 340.9 L970.1 337.3 L973.0 334.0 L975.9 330.9 L978.7 327.7 L981.6 324.7 L984.6 321.7 L987.8 318.9 L991.2 316.3 L994.9 314.0 L999.0 312.0 L1003.3 310.3 L1007.8 309.0 L1012.4 307.8 L1017.4 306.9 L1022.6 306.2 L1028.3 305.7 L1034.4 305.3 L1041.0 305.0 L1048.4 304.9 L1056.8 305.0 L1065.8 305.3 L1075.1 305.8 L1084.3 306.4 L1093.3 306.9 L1101.6 307.5 L1109.0 308.0 L1115.4 308.6 L1121.2 309.5 L1126.5 310.5 L1131.4 311.4 L1136.1 312.2 L1140.7 312.7 L1145.3 312.6 L1150.0 312.0 L1154.9 310.7 L1160.0 308.9 L1165.0 306.6 L1170.0 303.9 L1174.7 301.1 L1179.2 298.1 L1183.3 295.0 L1187.0 292.0 L1190.2 288.8 L1193.2 285.1 L1195.8 281.2 L1198.1 277.2 L1200.1 273.5 L1201.8 270.0 L1203.3 267.1 L1204.5 265.0Z" fill="#2a8073"/><path d="M1204.5 283.0 L1205.5 284.5 L1206.7 286.4 L1208.1 288.8 L1209.8 291.4 L1211.8 294.1 L1214.1 296.9 L1216.8 299.6 L1220.0 302.0 L1223.7 304.4 L1228.1 307.0 L1232.8 309.6 L1237.9 312.2 L1243.2 314.5 L1248.6 316.6 L1253.9 318.3 L1259.0 319.5 L1263.8 320.1 L1268.5 320.1 L1273.0 319.7 L1277.7 319.0 L1282.6 318.2 L1287.8 317.3 L1293.6 316.6 L1300.0 316.0 L1307.4 315.5 L1315.8 315.0 L1324.9 314.4 L1334.2 313.8 L1343.6 313.4 L1352.5 313.0 L1360.8 312.9 L1368.0 313.0 L1374.2 313.3 L1379.8 313.7 L1384.8 314.3 L1389.4 315.0 L1393.6 315.9 L1397.5 317.0 L1401.3 318.4 L1405.0 320.0 L1408.5 321.9 L1411.6 324.2 L1414.4 326.7 L1417.1 329.4 L1419.6 332.2 L1422.0 335.1 L1424.4 338.1 L1427.0 341.0 L1429.7 344.0 L1432.4 347.1 L1435.2 350.4 L1437.9 353.7 L1440.5 357.0 L1442.9 360.1 L1445.1 363.2 L1447.0 366.0 L1448.6 368.7 L1450.0 371.4 L1451.2 374.1 L1452.2 376.6 L1453.1 378.9 L1453.8 380.9 L1454.5 382.7 L1455.0 384.0 L1455.0 384.0 L1465.7 386.1 L1476.1 389.4 L1486.0 393.9 L1495.2 399.6 L1503.8 406.4 L1511.4 414.1 L1518.1 422.7 L1523.7 432.1 L1528.1 442.0 L1531.4 452.4 L1533.3 463.1 L1534.0 474.0 L1533.3 484.9 L1531.4 495.6 L1528.1 506.0 L1523.7 515.9 L1518.1 525.3 L1511.4 533.9 L1503.8 541.6 L1495.2 548.4 L1486.0 554.1 L1476.1 558.6 L1465.7 561.9 L1455.0 564.0 L1455.0 564.0 L1454.1 566.7 L1452.9 570.3 L1451.6 574.7 L1450.0 579.4 L1448.3 584.3 L1446.6 589.1 L1444.8 593.4 L1443.0 597.0 L1441.2 599.9 L1439.4 602.4 L1437.6 604.7 L1435.7 606.7 L1433.7 608.5 L1431.6 610.3 L1429.4 612.1 L1427.0 614.0 L1424.5 616.0 L1422.0 618.0 L1419.5 620.0 L1416.8 621.9 L1413.9 623.8 L1410.8 625.5 L1407.5 627.1 L1404.0 628.5 L1400.1 629.8 L1396.0 630.9 L1391.5 631.9 L1386.9 632.8 L1382.2 633.5 L1377.4 634.2 L1372.7 634.6 L1368.0 635.0 L1363.6 635.2 L1359.3 635.1 L1355.2 634.9 L1351.0 634.6 L1346.5 634.2 L1341.7 633.8 L1336.2 633.4 L1330.0 633.0 L1322.7 632.6 L1314.3 632.0 L1305.1 631.3 L1295.6 630.7 L1286.2 630.1 L1277.2 629.7 L1269.0 629.5 L1262.0 629.6 L1256.2 630.0 L1251.1 630.6 L1246.7 631.4 L1242.8 632.4 L1239.2 633.6 L1236.0 634.8 L1233.0 636.1 L1230.0 637.5 L1227.2 639.0 L1224.7 640.6 L1222.5 642.4 L1220.6 644.3 L1218.8 646.2 L1217.2 648.2 L1215.6 650.1 L1214.0 652.0 L1212.4 654.0 L1210.9 656.1 L1209.5 658.2 L1208.2 660.4 L1207.1 662.5 L1206.1 664.3 L1205.2 665.8 L1204.5 667.0 L1204.5 667.0 L1203.8 665.8 L1202.9 664.3 L1201.9 662.5 L1200.8 660.4 L1199.5 658.2 L1198.1 656.1 L1196.6 654.0 L1195.0 652.0 L1193.4 650.1 L1191.8 648.2 L1190.2 646.2 L1188.4 644.3 L1186.5 642.4 L1184.3 640.6 L1181.8 639.0 L1179.0 637.5 L1176.0 636.1 L1173.0 634.8 L1169.8 633.6 L1166.2 632.4 L1162.3 631.4 L1157.9 630.6 L1152.8 630.0 L1147.0 629.6 L1140.0 629.5 L1131.8 629.7 L1122.8 630.1 L1113.4 630.7 L1103.9 631.3 L1094.7 632.0 L1086.3 632.6 L1079.0 633.0 L1072.8 633.4 L1067.3 633.8 L1062.5 634.2 L1058.0 634.6 L1053.8 634.9 L1049.7 635.1 L1045.4 635.2 L1041.0 635.0 L1036.3 634.6 L1031.6 634.2 L1026.8 633.5 L1022.1 632.8 L1017.5 631.9 L1013.0 630.9 L1008.9 629.8 L1005.0 628.5 L1001.5 627.1 L998.2 625.5 L995.1 623.8 L992.2 621.9 L989.5 620.0 L987.0 618.0 L984.5 616.0 L982.0 614.0 L979.6 612.1 L977.4 610.3 L975.3 608.5 L973.3 606.7 L971.4 604.7 L969.6 602.4 L967.8 599.9 L966.0 597.0 L964.2 593.4 L962.4 589.1 L960.7 584.3 L959.0 579.4 L957.4 574.7 L956.1 570.3 L954.9 566.7 L954.0 564.0 L954.0 564.0 L943.3 561.9 L932.9 558.6 L923.0 554.1 L913.8 548.4 L905.2 541.6 L897.6 533.9 L890.9 525.3 L885.3 515.9 L880.9 506.0 L877.6 495.6 L875.7 484.9 L875.0 474.0 L875.7 463.1 L877.6 452.4 L880.9 442.0 L885.3 432.1 L890.9 422.7 L897.6 414.1 L905.2 406.4 L913.8 399.6 L923.0 393.9 L932.9 389.4 L943.3 386.1 L954.0 384.0 L954.0 384.0 L954.5 382.7 L955.2 380.9 L955.9 378.9 L956.8 376.6 L957.8 374.1 L959.0 371.4 L960.4 368.7 L962.0 366.0 L963.9 363.2 L966.1 360.1 L968.5 357.0 L971.1 353.7 L973.8 350.4 L976.6 347.1 L979.3 344.0 L982.0 341.0 L984.6 338.1 L987.0 335.1 L989.4 332.2 L991.9 329.4 L994.6 326.7 L997.4 324.2 L1000.5 321.9 L1004.0 320.0 L1007.7 318.4 L1011.5 317.0 L1015.4 315.9 L1019.6 315.0 L1024.2 314.3 L1029.2 313.7 L1034.8 313.3 L1041.0 313.0 L1048.2 312.9 L1056.5 313.0 L1065.4 313.4 L1074.8 313.8 L1084.1 314.4 L1093.2 315.0 L1101.6 315.5 L1109.0 316.0 L1115.4 316.6 L1121.2 317.3 L1126.4 318.2 L1131.3 319.0 L1136.0 319.7 L1140.5 320.1 L1145.2 320.1 L1150.0 319.5 L1155.1 318.3 L1160.4 316.6 L1165.8 314.5 L1171.1 312.2 L1176.2 309.6 L1180.9 307.0 L1185.3 304.4 L1189.0 302.0 L1192.2 299.6 L1194.9 296.9 L1197.2 294.1 L1199.2 291.4 L1200.9 288.8 L1202.3 286.4 L1203.5 284.5 L1204.5 283.0Z" fill="#e8472b"/><path d="M1204.5 301.0 L1205.3 302.2 L1206.3 303.7 L1207.4 305.5 L1208.8 307.6 L1210.3 309.7 L1212.0 311.9 L1213.9 314.0 L1216.0 316.0 L1218.4 318.0 L1221.2 320.0 L1224.3 322.2 L1227.5 324.2 L1230.8 326.3 L1234.1 328.1 L1237.2 329.7 L1240.0 331.0 L1242.5 332.0 L1244.6 332.7 L1246.5 333.3 L1248.4 333.6 L1250.5 333.8 L1252.8 334.0 L1255.6 334.0 L1259.0 334.0 L1262.9 333.9 L1267.1 333.6 L1271.6 333.2 L1276.4 332.8 L1281.7 332.2 L1287.3 331.8 L1293.4 331.3 L1300.0 331.0 L1307.7 330.8 L1316.7 330.6 L1326.5 330.4 L1336.6 330.3 L1346.3 330.2 L1355.1 330.1 L1362.6 330.1 L1368.0 330.0 L1368.0 330.0 L1372.1 330.1 L1376.1 330.5 L1380.1 331.2 L1384.0 332.1 L1387.9 333.3 L1391.7 334.7 L1395.4 336.4 L1399.0 338.3 L1402.4 340.4 L1405.7 342.8 L1408.9 345.4 L1411.8 348.2 L1414.6 351.1 L1417.2 354.3 L1419.6 357.6 L1421.7 361.0 L1423.6 364.6 L1425.3 368.3 L1426.7 372.1 L1427.9 376.0 L1428.8 379.9 L1429.5 383.9 L1429.9 387.9 L1430.0 392.0 L1430.0 392.0 L1439.5 394.1 L1448.8 397.3 L1457.6 401.6 L1465.8 406.8 L1473.4 413.0 L1480.1 420.1 L1486.0 427.9 L1491.0 436.3 L1494.9 445.3 L1497.7 454.6 L1499.4 464.2 L1500.0 474.0 L1499.4 483.8 L1497.7 493.4 L1494.9 502.7 L1491.0 511.7 L1486.0 520.1 L1480.1 527.9 L1473.4 535.0 L1465.8 541.2 L1457.6 546.4 L1448.8 550.7 L1439.5 553.9 L1430.0 556.0 L1430.0 556.0 L1429.9 560.1 L1429.5 564.1 L1428.8 568.1 L1427.9 572.0 L1426.7 575.9 L1425.3 579.7 L1423.6 583.4 L1421.7 587.0 L1419.6 590.4 L1417.2 593.7 L1414.6 596.9 L1411.8 599.8 L1408.9 602.6 L1405.7 605.2 L1402.4 607.6 L1399.0 609.7 L1395.4 611.6 L1391.7 613.3 L1387.9 614.7 L1384.0 615.9 L1380.1 616.8 L1376.1 617.5 L1372.1 617.9 L1368.0 618.0 L1368.0 618.0 L1362.3 617.9 L1354.4 617.8 L1345.1 617.7 L1334.8 617.6 L1324.2 617.4 L1313.8 617.3 L1304.2 617.1 L1296.0 617.0 L1288.9 616.8 L1282.3 616.5 L1276.1 616.2 L1270.3 615.9 L1264.9 615.7 L1259.9 615.6 L1255.3 615.7 L1251.0 616.0 L1247.2 616.5 L1243.9 617.2 L1241.1 618.0 L1238.6 618.9 L1236.4 620.0 L1234.3 621.2 L1232.2 622.6 L1230.0 624.0 L1227.8 625.6 L1225.7 627.4 L1223.7 629.4 L1221.8 631.5 L1220.0 633.6 L1218.3 635.8 L1216.6 637.9 L1215.0 640.0 L1213.4 642.1 L1211.8 644.4 L1210.3 646.7 L1208.8 649.0 L1207.5 651.2 L1206.3 653.1 L1205.3 654.8 L1204.5 656.0 L1204.5 656.0 L1203.7 654.8 L1202.7 653.1 L1201.5 651.2 L1200.2 649.0 L1198.7 646.7 L1197.2 644.4 L1195.6 642.1 L1194.0 640.0 L1192.4 637.9 L1190.7 635.8 L1189.0 633.6 L1187.2 631.5 L1185.3 629.4 L1183.3 627.4 L1181.2 625.6 L1179.0 624.0 L1176.8 622.6 L1174.7 621.2 L1172.6 620.0 L1170.4 618.9 L1167.9 618.0 L1165.1 617.2 L1161.8 616.5 L1158.0 616.0 L1153.7 615.7 L1149.1 615.6 L1144.1 615.7 L1138.7 615.9 L1132.9 616.2 L1126.7 616.5 L1120.1 616.8 L1113.0 617.0 L1104.8 617.1 L1095.2 617.3 L1084.8 617.4 L1074.2 617.6 L1063.9 617.7 L1054.6 617.8 L1046.7 617.9 L1041.0 618.0 L1041.0 618.0 L1036.9 617.9 L1032.9 617.5 L1028.9 616.8 L1025.0 615.9 L1021.1 614.7 L1017.3 613.3 L1013.6 611.6 L1010.0 609.7 L1006.6 607.6 L1003.3 605.2 L1000.1 602.6 L997.2 599.8 L994.4 596.9 L991.8 593.7 L989.4 590.4 L987.3 587.0 L985.4 583.4 L983.7 579.7 L982.3 575.9 L981.1 572.0 L980.2 568.1 L979.5 564.1 L979.1 560.1 L979.0 556.0 L979.0 556.0 L969.5 553.9 L960.2 550.7 L951.4 546.4 L943.2 541.2 L935.6 535.0 L928.9 527.9 L923.0 520.1 L918.0 511.7 L914.1 502.7 L911.3 493.4 L909.6 483.8 L909.0 474.0 L909.6 464.2 L911.3 454.6 L914.1 445.3 L918.0 436.3 L923.0 427.9 L928.9 420.1 L935.6 413.0 L943.2 406.8 L951.4 401.6 L960.2 397.3 L969.5 394.1 L979.0 392.0 L979.0 392.0 L979.1 387.9 L979.5 383.9 L980.2 379.9 L981.1 376.0 L982.3 372.1 L983.7 368.3 L985.4 364.6 L987.3 361.0 L989.4 357.6 L991.8 354.3 L994.4 351.1 L997.2 348.2 L1000.1 345.4 L1003.3 342.8 L1006.6 340.4 L1010.0 338.3 L1013.6 336.4 L1017.3 334.7 L1021.1 333.3 L1025.0 332.1 L1028.9 331.2 L1032.9 330.5 L1036.9 330.1 L1041.0 330.0 L1041.0 330.0 L1046.4 330.1 L1053.9 330.1 L1062.7 330.2 L1072.4 330.3 L1082.5 330.4 L1092.3 330.6 L1101.3 330.8 L1109.0 331.0 L1115.6 331.3 L1121.7 331.8 L1127.3 332.2 L1132.6 332.8 L1137.4 333.2 L1141.9 333.6 L1146.1 333.9 L1150.0 334.0 L1153.4 334.0 L1156.2 334.0 L1158.5 333.8 L1160.6 333.6 L1162.5 333.3 L1164.4 332.7 L1166.5 332.0 L1169.0 331.0 L1171.8 329.7 L1174.9 328.1 L1178.2 326.3 L1181.5 324.2 L1184.7 322.2 L1187.8 320.0 L1190.6 318.0 L1193.0 316.0 L1195.1 314.0 L1197.0 311.9 L1198.7 309.7 L1200.2 307.6 L1201.6 305.5 L1202.7 303.7 L1203.7 302.2 L1204.5 301.0Z" fill="#eeebb6"/><circle cx="982" cy="474" r="66" fill="#f1862a"/><circle cx="982" cy="474" r="51" fill="#9c1c22"/><path d="M1146.8 455V374.7 M1143.2 378.55H1163.6 M1146.8 413.9H1157.1M1165.6 455V395.7 M1165.6 405.3Q1165.6 399.3 1171.6 399.3H1171.3000000000002V403.7M1189.1 399.3H1190.8000000000002Q1196.8000000000002 399.3 1196.8000000000002 405.3V445.4Q1196.8000000000002 451.4 1190.8000000000002 451.4H1189.1Q1183.1 451.4 1183.1 445.4V405.3Q1183.1 399.3 1189.1 399.3ZM1209.6 455V374.7 M1209.6 455V405.3Q1209.6 399.3 1215.6 399.3H1217.9Q1223.9 399.3 1223.9 405.3V455M1237.3 423H1251.5V405.3Q1251.5 399.3 1245.5 399.3H1243.3Q1237.3 399.3 1237.3 405.3V445.4Q1237.3 451.4 1243.3 451.4H1245.5Q1251.5 451.4 1251.5 445.4V437.20000000000005" fill="none" stroke="#9b2126" stroke-width="7.2"/><path d="M1122.6499999999999 524H1135.8500000000001V506.35Q1135.8500000000001 500.35 1129.8500000000001 500.35H1128.6499999999999Q1122.6499999999999 500.35 1122.6499999999999 506.35V546.65Q1122.6499999999999 552.65 1128.6499999999999 552.65H1129.8500000000001Q1135.8500000000001 552.65 1135.8500000000001 546.65V537.7M1149.25 556V497 M1149.25 476V486M1162.75 556V476 M1162.75 556V506.35Q1162.75 500.35 1168.75 500.35H1170.0500000000002Q1176.0500000000002 500.35 1176.0500000000002 506.35V556M1189.85 556V506.35Q1189.85 500.35 1195.85 500.35H1197.65Q1203.65 500.35 1203.65 506.35V556M1217.35 518V506.35Q1217.35 500.35 1223.35 500.35H1224.25Q1230.25 500.35 1230.25 506.35V556 M1230.25 527.35H1223.35Q1217.35 527.35 1217.35 533.35V546.65Q1217.35 552.65 1223.35 552.65H1230.25M1257.3500000000001 518V506.35Q1257.3500000000001 500.35 1251.3500000000001 500.35H1250.05Q1244.05 500.35 1244.05 506.35V546.65Q1244.05 552.65 1250.05 552.65H1251.3500000000001Q1257.3500000000001 552.65 1257.3500000000001 546.65V534M1270.1499999999999 556V476 M1270.1499999999999 556V506.35Q1270.1499999999999 500.35 1276.1499999999999 500.35H1277.95Q1283.95 500.35 1283.95 506.35V556M1297.7499999999998 476V546.65Q1297.7499999999998 552.65 1303.7499999999998 552.65H1303.6 M1291.3 500.35H1303.6M1311.55 524H1323.75V506.35Q1323.75 500.35 1317.75 500.35H1317.55Q1311.55 500.35 1311.55 506.35V546.65Q1311.55 552.65 1317.55 552.65H1317.75Q1323.75 552.65 1323.75 546.65V537.7M1337.6499999999999 556V506.35Q1337.6499999999999 500.35 1343.6499999999999 500.35H1345.3500000000001Q1351.3500000000001 500.35 1351.3500000000001 506.35V556" fill="none" stroke="#7c2a83" stroke-width="6.7"/><path d="M1070.7 476H1078.4L1084.2 533L1090.7 476H1097.8L1104.5 533L1111 476H1118.8L1108 556H1101L1094.3 500L1087.6 556H1080.4Z" fill="#7c2a83"/><rect x="840.5" y="240.5" width="721" height="468" fill="none" stroke="#6a2a7a" stroke-width="1"/><path d="M754 152H1649V797H754Z M767 165V784H1636V165Z" fill="rgb(236,150,30)" fill-opacity="0.82" fill-rule="evenodd"/><path d="M767 165H1636V784H767Z M784 184V767H1620V184Z" fill="rgb(222,220,223)" fill-opacity="0.7" fill-rule="evenodd"/><rect x="766.5" y="165.5" width="870" height="619" fill="none" stroke="#111" stroke-width="1.1"/></g></svg>

<!-- modal -->
<div class="a" style="left:661px;top:85px;width:598px;height:245px;background:#d7e9f3;border:1px solid #c3d6e2;box-shadow:-3px 3px 6px rgba(0,0,0,0.3)"></div>
<div class="a" style="left:676px;top:101px;font-size:18px;line-height:22px;color:#3a6b87;white-space:nowrap">Druckvorschau prüfen</div>
<div class="a" style="left:662px;top:143px;width:596px;height:1px;background:#d3e5ef"></div>
<div class="a" style="left:676px;top:156px;width:580px;font-size:14.2px;line-height:19px;color:#3a6b87">Prüfen Sie bitte die Druckvorschau, da diese vom Layout abweichen kann. Sollte Text<br>abgeschnitten sein, müssen Sie ggf. die Texfelder vergrößern.<br>Beachten Sie: Die Vorschau beinhaltet an jeder Seite 3mm Beschnittzugabe, welche nach<br>dem Druck abgeschnitten wird. Elemente die bis zum Rand (grauer Bereich) gehen<br>sollen, müssen(!) mind. 3mm über diese hinausgezogen werden</div>
<div class="a" style="left:982px;top:282px;width:95px;height:33px;background:#5bc0de;border:1px solid #46b8da;border-radius:4px;color:#fff;font-size:14px;line-height:31px;text-align:center;-webkit-text-stroke:0.35px #fff">Abbrechen</div>
<div class="a" style="left:1087px;top:282px;width:157px;height:33px;background:#f4f4f6;border:1px solid #bdbdbd;border-radius:4px;color:#333;font-size:14px;line-height:31px;text-align:center">Vorschau generieren</div>
</body></html>
